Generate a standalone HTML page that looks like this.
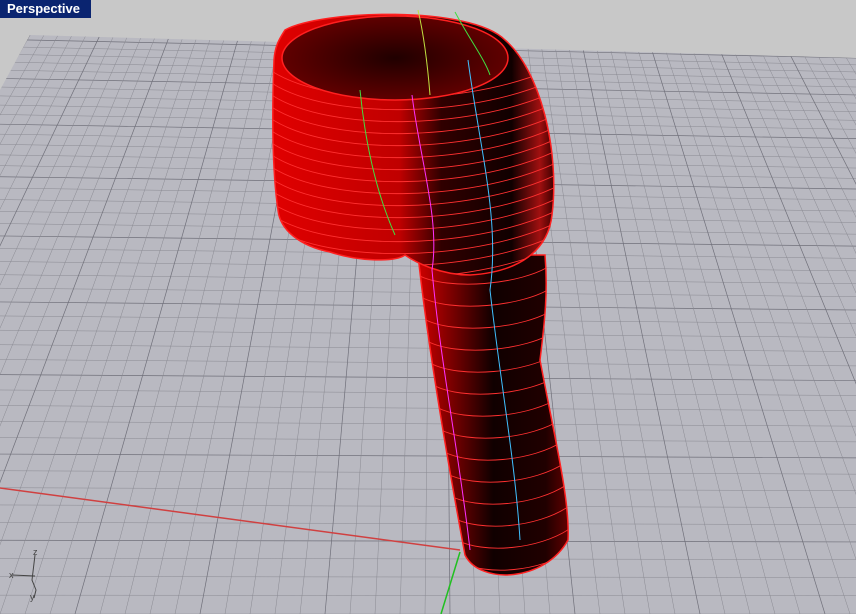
<!DOCTYPE html>
<html><head><style>
html,body{margin:0;padding:0;width:856px;height:614px;overflow:hidden;background:#c8c8c8}
#lbl{position:absolute;left:0;top:0;width:91px;height:18px;background:#0a2470;color:#fff;font:bold 13px "Liberation Sans",sans-serif;line-height:18px;padding-left:7px;box-sizing:border-box}
svg{position:absolute;left:0;top:0;overflow:hidden}
</style></head><body>
<svg id="s" width="856" height="614" viewBox="0 0 856 614">
<defs>
<linearGradient id="g1" x1="0" x2="1" y1="0" y2="0">
<stop offset="0" stop-color="#e00000"/><stop offset="0.45" stop-color="#c00000"/><stop offset="0.6" stop-color="#300000"/><stop offset="0.85" stop-color="#100000"/><stop offset="0.95" stop-color="#a01010"/><stop offset="1" stop-color="#400000"/>
</linearGradient>
<linearGradient id="g2" x1="0" x2="1" y1="0" y2="0">
<stop offset="0" stop-color="#d00000"/><stop offset="0.25" stop-color="#700000"/><stop offset="0.5" stop-color="#100000"/><stop offset="0.85" stop-color="#200000"/><stop offset="1" stop-color="#600000"/>
</linearGradient>
<radialGradient id="g3" cx="0.5" cy="0.5" r="0.5"><stop offset="0" stop-color="#200000"/><stop offset="1" stop-color="#600000"/></radialGradient>
<clipPath id="cHip"><path d="M285,30 C320,10 470,5 505,40 C540,70 560,150 552,215 C548,250 520,272 470,275 C440,275 415,262 405,255 C395,262 360,262 330,252 C300,246 280,230 278,210 C272,170 272,110 274,60 C275,45 280,38 285,30 Z"/></clipPath>
<clipPath id="cLeg"><path d="M418,255 C425,320 440,420 465,555 C480,585 545,582 568,540 C570,500 555,440 540,360 C545,320 548,290 545,255 Z"/></clipPath>
<clipPath id="cPlane"><polygon points="30,35 856,58 856,614 0,614 0,90"/></clipPath>
</defs>
<polygon points="30,35 856,58 856,614 0,614 0,90" fill="#b9b9c1"/>
<g id="grid" stroke="#8a8a92" stroke-width="0.5" fill="none" clip-path="url(#cPlane)"></g>
<line x1="0" y1="488" x2="460" y2="550" stroke="#d04040" stroke-width="1.5"/>
<line x1="460" y1="552" x2="441" y2="614" stroke="#20c020" stroke-width="1.5"/>
<path d="M418,255 C425,320 440,420 465,555 C480,585 545,582 568,540 C570,500 555,440 540,360 C545,320 548,290 545,255 Z" fill="url(#g2)" stroke="#ff2020" stroke-width="1.5"/>
<g stroke="#ff3030" stroke-width="0.9" fill="none" id="lrings" clip-path="url(#cLeg)"></g>
<path d="M285,30 C320,10 470,5 505,40 C540,70 560,150 552,215 C548,250 520,272 470,275 C440,275 415,262 405,255 C395,262 360,262 330,252 C300,246 280,230 278,210 C272,170 272,110 274,60 C275,45 280,38 285,30 Z" fill="url(#g1)" stroke="#ff2020" stroke-width="1.5"/>
<g stroke="#ff3030" stroke-width="0.9" fill="none" id="rings" clip-path="url(#cHip)"></g>
<ellipse cx="395" cy="58" rx="113" ry="42" fill="url(#g3)" stroke="#ff2020" stroke-width="1.5"/>
<path d="M360,90 C365,140 375,190 395,235" stroke="#40e040" fill="none"/>
<path d="M412,95 C420,160 440,220 432,270 C440,360 460,460 470,550" stroke="#ff30ff" fill="none"/>
<path d="M468,60 C480,150 500,220 490,290 C500,380 515,460 520,540" stroke="#40c0ff" fill="none"/>
<path d="M418,10 C425,40 428,70 430,95" stroke="#c0e040" fill="none"/>
<path d="M455,12 C470,40 485,60 490,75" stroke="#40e040" fill="none"/>
<g stroke="#444" fill="none" stroke-width="1">
<path d="M35,555 L32,580 L36,590 L34,598"/><path d="M12,575 L35,576"/>
</g>
<text x="33" y="555" font-family="Liberation Sans,sans-serif" font-size="9" fill="#444">z</text>
<text x="9" y="578" font-family="Liberation Sans,sans-serif" font-size="9" fill="#444">x</text>
<text x="30" y="600" font-family="Liberation Sans,sans-serif" font-size="9" fill="#444">y</text>
</svg>
<div id="lbl">Perspective</div>
<script>
var NS="http://www.w3.org/2000/svg",g=document.getElementById('grid');
function L(x1,y1,x2,y2,w){var l=document.createElementNS(NS,'line');l.setAttribute('x1',x1);l.setAttribute('y1',y1);l.setAttribute('x2',x2);l.setAttribute('y2',y2);if(w){l.setAttribute('stroke-width',w);l.setAttribute('stroke','#70707a');}g.appendChild(l);}
var N=44;
for(var j=0;j<=N;j++){var t=j/N;var y=35+579*t*(0.55+0.45*t);
 L(-200,y, 856, y+23*(1-t), j%5?0:0.7);}
for(var i=-20;i<=80;i++){var u=i/60;L(30+u*830,35+u*23,-300+u*1500,614,i%5?0:0.7);}
var r=document.getElementById('rings');
for(var y=90;y<=270;y+=12){var p=document.createElementNS(NS,'path');p.setAttribute('d','M270,'+(y-20)+' C330,'+(y+20)+' 480,'+(y+15)+' 560,'+(y-25));r.appendChild(p);}
var r2=document.getElementById('lrings');
for(var y=275;y<=565;y+=22){var f=(y-255)/325;var x1=415+f*45,x2=550+f*22;var p=document.createElementNS(NS,'path');p.setAttribute('d','M'+x1+','+y+' C'+(x1+30)+','+(y+16)+' '+(x2-30)+','+(y+10)+' '+x2+','+(y-10));r2.appendChild(p);}
</script>
</body></html>
